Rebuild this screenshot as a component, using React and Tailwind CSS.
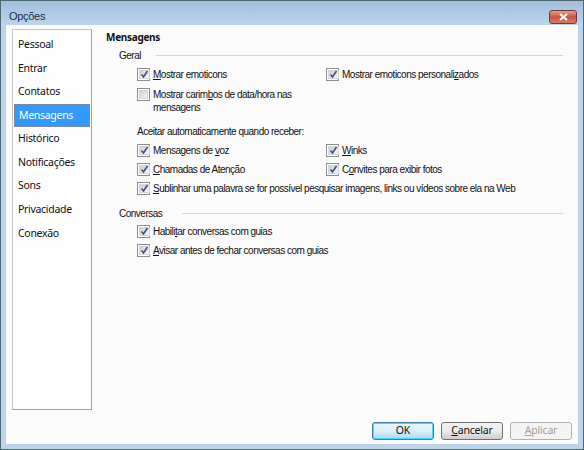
import React from "react";

const NAV = ["Pessoal", "Entrar", "Contatos", "Mensagens", "Histórico", "Notificações", "Sons", "Privacidade", "Conexão"];

const noto = { fontFamily: "'Noto Sans', sans-serif" };

function Check({ on = true }) {
  return (
    <span className="w-[13px] h-[13px] shrink-0 border border-[#8e8f8f] bg-white p-[1px] flex">
      <span className="flex-1 border border-[#d6d6d6] bg-gradient-to-br from-[#cfcfcf] to-[#f6f6f6] flex items-center justify-center">
        {on && (
          <svg width="9" height="9" viewBox="0 0 9 9">
            <path d="M1.5 4.5 L3.5 7 L7.5 1" fill="none" stroke="#3b4f88" strokeWidth="1.6" />
          </svg>
        )}
      </span>
    </span>
  );
}

function Box({ children, on = true, className = "" }) {
  return (
    <div className={`flex items-start gap-[3px] ${className}`}>
      <Check on={on} />
      <span className="leading-[13px]">{children}</span>
    </div>
  );
}

function Group({ title, gap }) {
  return (
    <div className={`flex items-center pl-[13px] leading-[13px] ${gap}`}>
      <span>{title}</span>
      <span className="flex-1 h-px bg-[#d5d5d5]" />
    </div>
  );
}

export default function App() {
  return (
    <div
      className="w-[584px] h-[450px] flex flex-col bg-[#bcd3ea] border border-[#4d6a72] text-[#111] text-[10px] tracking-[-0.5px]"
      style={{ fontFamily: "'Liberation Sans', Arial, sans-serif" }}
    >
      {/* Title */}
      <div className="h-[24px] flex items-center justify-between bg-gradient-to-b from-[#a2bedd] to-[#bcd4ec] pl-[8px] pr-[6px]">
        <span className="text-[11px] tracking-[-0.3px] text-[#1b2f4a] mt-[6px]">Opções</span>
        <div className="w-[28px] h-[14px] mt-[7px] rounded-[3px] border border-[#6e3a3a] bg-gradient-to-b from-[#e3a08d] via-[#c95340] to-[#d37d6c] flex items-center justify-center">
          <svg width="9" height="8" viewBox="0 0 9 8">
            <path d="M1 1 L8 7 M8 1 L1 7" stroke="white" strokeWidth="2" />
          </svg>
        </div>
      </div>

      {/* Client */}
      <div className="flex-1 mx-[5px] mb-[5px] bg-[#fbfbfb] flex flex-col">
        <div className="flex flex-1 pt-[4px] pl-[6px]">
          <div className="w-[80px] h-[381px] border border-[#9aa2ac] border-t-[#c3c6cb] border-l-[#c3c6cb] bg-[#fdfdfd] pt-[3px] pl-[1px] pr-[1px]">
            {NAV.map((n) => (
              <div
                key={n}
                className={`h-[23.6px] flex items-center pl-[4px] text-[10.5px] tracking-[-0.3px] ${
                  n === "Mensagens" ? "bg-[#3399ff] text-white border border-[#7b8a9c]" : "text-[#111]"
                }`}
                style={noto}
              >
                {n}
              </div>
            ))}
          </div>

          <div className="flex-1 pl-[14px] pr-[15px] flex flex-col">
            <div className="font-bold text-[10px] tracking-[-0.3px] leading-[14px] mt-[1px]" style={noto}>Mensagens</div>
            <div className="mt-[5px]"><Group title="Geral" gap="gap-[15px]" /></div>

            <div className="pl-[31px] mt-[6px] grid grid-cols-[189px_1fr] gap-y-[7px]">
              <Box><u>M</u>ostrar emoticons</Box>
              <Box>Mostrar emoticons personali<u>z</u>ados</Box>
              <Box on={false}>Mostrar carim<u>b</u>os de data/hora nas<br />mensagens</Box>
              <div />
            </div>

            <div className="pl-[31px] mt-[11px] leading-[13px]">Aceitar automaticamente quando receber:</div>

            <div className="pl-[31px] mt-[6px] grid grid-cols-[189px_1fr] gap-y-[6px]">
              <Box>Mensagens de <u>v</u>oz</Box>
              <Box><u>W</u>inks</Box>
              <Box><u>C</u>hamadas de Atenção</Box>
              <Box>C<u>o</u>nvites para exibir fotos</Box>
              <Box className="col-span-2"><u>S</u>ublinhar uma palavra se for possível pesquisar imagens, links ou vídeos sobre ela na Web</Box>
            </div>

            <div className="mt-[12px]"><Group title="Conversas" gap="gap-[20px]" /></div>

            <div className="pl-[31px] mt-[5px] flex flex-col gap-[6px]">
              <Box>Habili<u>t</u>ar conversas com guias</Box>
              <Box><u>A</u>visar antes de fechar conversas com guias</Box>
            </div>
          </div>
        </div>

        <div className="flex justify-end gap-[7px] pr-[6px] pb-[4px] pt-[8px] text-[10.5px] tracking-[-0.2px]">
          <button className="w-[62px] h-[18px] rounded-[3px] border border-[#3c7fb1] bg-gradient-to-b from-[#eaf6fd] via-[#d9f0fc] to-[#a7d9f5] shadow-[inset_0_0_0_1px_#48d7fb]" style={noto}>OK</button>
          <button className="w-[62px] h-[18px] rounded-[3px] border border-[#707070] bg-gradient-to-b from-[#f2f2f2] via-[#ebebeb] to-[#cfcfcf]" style={noto}><u>C</u>ancelar</button>
          <button className="w-[62px] h-[18px] rounded-[3px] border border-[#adb2b5] bg-[#f4f4f4] text-[#a0a0a0]" style={noto}><u>A</u>plicar</button>
        </div>
      </div>
    </div>
  );
}
